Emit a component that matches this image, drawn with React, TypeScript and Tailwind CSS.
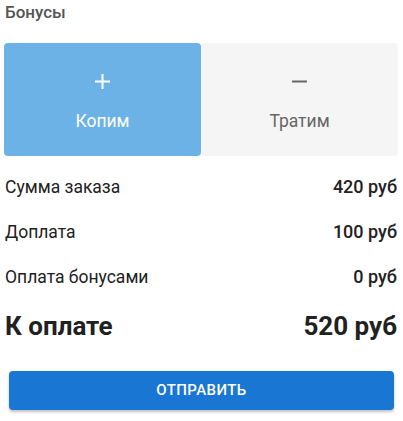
import React from "react";

export default function App() {
  return (
    <div className="w-[403px] h-[421px] bg-white overflow-hidden font-['Roboto',sans-serif]">
      <div className="pl-[5px] h-[24px] leading-[24px] text-[17px] font-medium text-[#555555]">Бонусы</div>
      <div className="mt-[19px] mx-[4px] flex h-[113px]">
        <div className="w-[197px] rounded-[4px] bg-[#6db2e6] flex flex-col items-center">
          <svg className="mt-[31px]" width="15" height="15" viewBox="0 0 15 15">
            <path d="M7.5 0v15M0 7.5h15" stroke="#ffffff" strokeWidth="2" />
          </svg>
          <div className="mt-[20px] text-[17.5px] leading-[24px] text-white">Копим</div>
        </div>
        <div className="w-[197px] rounded-[4px] bg-[#f5f5f5] flex flex-col items-center">
          <svg className="mt-[31px]" width="15" height="15" viewBox="0 0 15 15">
            <path d="M0 7.5h15" stroke="#666666" strokeWidth="2" />
          </svg>
          <div className="mt-[20px] text-[17.5px] leading-[24px] text-[#666666]">Тратим</div>
        </div>
      </div>
      <div className="mt-[19px] pl-[5px] pr-[6px] flex flex-col gap-[21px] text-[17.5px] leading-[24px] text-[#212121]">
        <div className="flex justify-between">
          <span>Сумма заказа</span>
          <span className="font-medium text-[18px]">420 руб</span>
        </div>
        <div className="flex justify-between">
          <span>Доплата</span>
          <span className="font-medium text-[18px]">100 руб</span>
        </div>
        <div className="flex justify-between">
          <span>Оплата бонусами</span>
          <span className="font-medium text-[18px]">0 руб</span>
        </div>
      </div>
      <div className="mt-[21px] pl-[5px] pr-[6px] flex justify-between text-[26px] leading-[32px] font-bold text-[#212121]">
        <span>К оплате</span>
        <span>520 руб</span>
      </div>
      <div className="mt-[29px] mx-[9px] h-[39px] rounded-[4px] bg-[#1976d2] shadow-[0_2px_3px_rgba(0,0,0,0.25)] flex items-center justify-center text-white text-[15px] font-medium tracking-[0.4px]">
        ОТПРАВИТЬ
      </div>
    </div>
  );
}
